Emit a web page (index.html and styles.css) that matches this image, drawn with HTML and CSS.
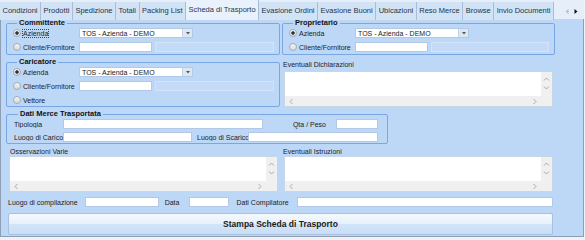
FILE: index.html
```html
<!DOCTYPE html>
<html lang="it">
<head>
    <meta charset="UTF-8">
    <title>Scheda di Trasporto</title>
    <link rel="stylesheet" href="styles.css">
</head>
<body>
    <div class="window">
        <div class="tabs">
            <div class="tab">Condizioni</div>
            <div class="tab">Prodotti</div>
            <div class="tab">Spedizione</div>
            <div class="tab">Totali</div>
            <div class="tab">Packing List</div>
            <div class="tab active">Scheda di Trasporto</div>
            <div class="tab">Evasione Ordini</div>
            <div class="tab">Evasione Buoni</div>
            <div class="tab">Ubicazioni</div>
            <div class="tab">Reso Merce</div>
            <div class="tab">Browse</div>
            <div class="tab">Invio Documenti</div>
            <div class="tab-arrows">
                <svg width="4" height="5" viewBox="0 0 4 5"><polygon points="3.5,0 0.5,2.5 3.5,5" fill="#b4bcc8"/></svg>
                <svg width="4" height="5" viewBox="0 0 4 5"><polygon points="0.5,0 3.5,2.5 0.5,5" fill="#111"/></svg>
            </div>
        </div>

        <div class="page">
            <div class="sheet">
                <div class="top">
                    <div class="col left">
                        <fieldset class="group">
                            <legend>Committente</legend>
                            <div class="row">
                                <label class="opt"><span class="radio on"></span><span class="focus">Azienda</span></label>
                                <div class="select">TOS - Azienda - DEMO<span class="drop"><svg width="4" height="3" viewBox="0 0 4 3"><polygon points="0,0 4,0 2,2.5" fill="#555"/></svg></span></div>
                            </div>
                            <div class="row">
                                <label class="opt"><span class="radio"></span>Cliente/Fornitore</label>
                                <span class="field code"></span>
                                <span class="field off"></span>
                            </div>
                        </fieldset>

                        <fieldset class="group carrier">
                            <legend>Caricatore</legend>
                            <div class="row">
                                <label class="opt"><span class="radio on"></span>Azienda</label>
                                <div class="select">TOS - Azienda - DEMO<span class="drop"><svg width="4" height="3" viewBox="0 0 4 3"><polygon points="0,0 4,0 2,2.5" fill="#555"/></svg></span></div>
                            </div>
                            <div class="row">
                                <label class="opt"><span class="radio"></span>Cliente/Fornitore</label>
                                <span class="field code"></span>
                                <span class="field off"></span>
                            </div>
                            <div class="row">
                                <label class="opt"><span class="radio"></span>Vettore</label>
                            </div>
                        </fieldset>
                    </div>

                    <div class="col right">
                        <fieldset class="group">
                            <legend>Proprietario</legend>
                            <div class="row">
                                <label class="opt"><span class="radio on"></span>Azienda</label>
                                <div class="select">TOS - Azienda - DEMO<span class="drop"><svg width="4" height="3" viewBox="0 0 4 3"><polygon points="0,0 4,0 2,2.5" fill="#555"/></svg></span></div>
                            </div>
                            <div class="row">
                                <label class="opt"><span class="radio"></span>Cliente/Fornitore</label>
                                <span class="field code"></span>
                                <span class="field off"></span>
                            </div>
                        </fieldset>

                        <div class="caption decl">Eventuali Dichiarazioni</div>
                        <div class="memo">
                            <div class="memo-text"></div>
                            <div class="vbar">
                                <svg width="7" height="4" viewBox="0 0 7 4"><polyline points="1,3.5 3.5,1 6,3.5" fill="none" stroke="#a9a9a9"/></svg>
                                <svg width="7" height="4" viewBox="0 0 7 4"><polyline points="1,0.5 3.5,3 6,0.5" fill="none" stroke="#a9a9a9"/></svg>
                            </div>
                            <div class="hbar">
                                <svg width="4" height="7" viewBox="0 0 4 7"><polyline points="3.5,1 1,3.5 3.5,6" fill="none" stroke="#a9a9a9"/></svg>
                                <svg width="4" height="7" viewBox="0 0 4 7"><polyline points="0.5,1 3,3.5 0.5,6" fill="none" stroke="#a9a9a9"/></svg>
                            </div>
                            <div class="corner"></div>
                        </div>
                    </div>
                </div>

                <fieldset class="group goods">
                    <legend>Dati Merce Trasportata</legend>
                    <div class="row">
                        <span class="lbl">Tipologia</span>
                        <span class="field type"></span>
                        <span class="qty">Qta / Peso</span>
                        <span class="field weight"></span>
                    </div>
                    <div class="row">
                        <span class="lbl">Luogo di Carico</span>
                        <span class="field load"></span>
                        <span class="lbl unload">Luogo di Scarico</span>
                        <span class="field grow"></span>
                    </div>
                </fieldset>

                <div class="notes">
                    <div class="col left">
                        <div class="caption">Osservazioni Varie</div>
                        <div class="memo">
                            <div class="memo-text"></div>
                            <div class="vbar">
                                <svg width="7" height="4" viewBox="0 0 7 4"><polyline points="1,3.5 3.5,1 6,3.5" fill="none" stroke="#a9a9a9"/></svg>
                                <svg width="7" height="4" viewBox="0 0 7 4"><polyline points="1,0.5 3.5,3 6,0.5" fill="none" stroke="#a9a9a9"/></svg>
                            </div>
                            <div class="hbar">
                                <svg width="4" height="7" viewBox="0 0 4 7"><polyline points="3.5,1 1,3.5 3.5,6" fill="none" stroke="#a9a9a9"/></svg>
                                <svg width="4" height="7" viewBox="0 0 4 7"><polyline points="0.5,1 3,3.5 0.5,6" fill="none" stroke="#a9a9a9"/></svg>
                            </div>
                            <div class="corner"></div>
                        </div>
                    </div>
                    <div class="col right">
                        <div class="caption">Eventuali Istruzioni</div>
                        <div class="memo">
                            <div class="memo-text"></div>
                            <div class="vbar">
                                <svg width="7" height="4" viewBox="0 0 7 4"><polyline points="1,3.5 3.5,1 6,3.5" fill="none" stroke="#a9a9a9"/></svg>
                                <svg width="7" height="4" viewBox="0 0 7 4"><polyline points="1,0.5 3.5,3 6,0.5" fill="none" stroke="#a9a9a9"/></svg>
                            </div>
                            <div class="hbar">
                                <svg width="4" height="7" viewBox="0 0 4 7"><polyline points="3.5,1 1,3.5 3.5,6" fill="none" stroke="#a9a9a9"/></svg>
                                <svg width="4" height="7" viewBox="0 0 4 7"><polyline points="0.5,1 3,3.5 0.5,6" fill="none" stroke="#a9a9a9"/></svg>
                            </div>
                            <div class="corner"></div>
                        </div>
                    </div>
                </div>

                <div class="compile">
                    <span>Luogo di compilazione</span>
                    <span class="field place"></span>
                    <span class="gap-data">Data</span>
                    <span class="field date"></span>
                    <span class="gap-author">Dati Compilatore</span>
                    <span class="field grow author"></span>
                </div>

                <button class="print">Stampa Scheda di Trasporto</button>
            </div>
        </div>
    </div>
</body>
</html>
```

FILE: styles.css
```css
* {
    box-sizing: border-box;
}

body {
    margin: 0;
    background: #eef3f9;
    font-family: "Liberation Sans", Arial, sans-serif;
    font-size: 7px;
    color: #222;
}

.window {
    width: 584px;
}

/* tab strip */
.tabs {
    display: flex;
    align-items: flex-end;
    height: 20px;
    background: #e6eff9;
}

.tab {
    height: 18px;
    line-height: 17px;
    padding: 0 2.5px;
    font-size: 7.5px;
    color: #24344c;
    white-space: nowrap;
    background: #d2e3f6;
    border-right: 1px solid #a7bdd8;
}

.tab.active {
    height: 20px;
    line-height: 19px;
    background: #e9f2fc;
}

.tab-arrows {
    flex: 1;
    height: 18px;
    display: flex;
    align-items: center;
    justify-content: flex-end;
    gap: 5px;
    padding-right: 6px;
}

/* tab page */
.page {
    height: 218px;
    background: #bdd7f7;
    border: 1px solid #8e9fb5;
    border-top: none;
    padding-left: 5px;
}

.sheet {
    width: 549px;
}

.top, .notes {
    display: flex;
    gap: 2px;
}

.top {
    margin-top: -1px;
}

.col {
    display: flex;
    flex-direction: column;
}

.col.left {
    width: 274px;
}

.col.right {
    width: 273px;
}

/* group boxes */
.group {
    margin: 0;
    min-width: 0;
    padding: 1px 5px 2px 6px;
    border: 1px solid #79a7e3;
    border-radius: 2px;
}

.group legend {
    margin-left: 4px;
    padding: 0 2px;
    font-size: 7.5px;
    line-height: 8px;
    font-weight: bold;
    color: #111;
}

.group.carrier {
    margin-top: 3px;
    padding-bottom: 1px;
}

.row {
    display: flex;
    align-items: center;
    height: 10px;
}

.row + .row {
    margin-top: 4px;
}

.goods .row + .row {
    margin-top: 3px;
}

.opt {
    width: 66px;
    display: flex;
    align-items: center;
    gap: 2px;
    white-space: nowrap;
}

.focus {
    outline: 1px dotted #444;
    outline-offset: 0;
}

.radio {
    width: 8px;
    height: 8px;
    border-radius: 50%;
    border: 1px solid #a3acb8;
    background: linear-gradient(#f6f6f6, #d6d8db);
}

.radio.on {
    background: radial-gradient(circle, #2f3338 0 1.4px, transparent 2px), linear-gradient(#f6f6f6, #d6d8db);
}

.select {
    display: flex;
    align-items: center;
    width: 114px;
    height: 10px;
    padding-left: 2px;
    background: #fff;
    border: 1px solid #b2c8e4;
    white-space: nowrap;
}

.drop {
    margin-left: auto;
    width: 10px;
    height: 100%;
    display: flex;
    align-items: center;
    justify-content: center;
    background: #dde7f3;
    border-left: 1px solid #c3d3e7;
}

.field {
    height: 10px;
    background: #fff;
    border: 1px solid #b2c8e4;
}

.field.code {
    width: 73px;
}

.field.off {
    flex: 1;
    margin-left: 3px;
    background: #c3dbf8;
    border-color: #d4e4f8;
}

.field.grow {
    flex: 1;
}

/* memo boxes */
.caption {
    line-height: 8px;
    white-space: nowrap;
}

.caption.decl {
    margin-top: 6px;
    margin-left: 1px;
}

.decl + .memo {
    margin-top: 2px;
}

.memo {
    display: grid;
    grid-template-columns: 1fr 11px;
    grid-template-rows: 1fr 10px;
    width: 269px;
    height: 36px;
    margin-left: 2px;
    background: #fff;
    border: 1px solid #c8d6e8;
}

.vbar {
    display: flex;
    flex-direction: column;
    justify-content: space-between;
    align-items: center;
    padding: 5px 0 6px;
    background: #f0f0f0;
}

.hbar {
    display: flex;
    justify-content: space-between;
    align-items: center;
    padding: 0 4px;
    background: #f0f0f0;
}

.corner {
    background: #f0f0f0;
}

/* goods */
.group.goods {
    width: 382px;
    margin-top: 3px;
    padding: 1px 9px 1px 7px;
}

.lbl {
    width: 49px;
    white-space: nowrap;
    overflow: hidden;
}

.lbl.unload {
    width: 51px;
    margin-left: 5px;
}

.field.type {
    width: 200px;
}

.qty {
    flex: 1;
    text-align: right;
    padding-right: 10px;
    white-space: nowrap;
}

.field.weight {
    width: 42px;
}

.field.load {
    width: 129px;
}

.notes {
    margin-top: 4px;
}

.notes .left .caption {
    margin-left: 4px;
}

.notes .left .memo {
    margin-left: 3px;
}

.notes .right .caption {
    margin-left: 1px;
}

/* footer */
.compile {
    display: flex;
    align-items: center;
    height: 10px;
    margin-top: 5px;
    padding: 0 2px;
    white-space: nowrap;
}

.field.place {
    width: 74px;
    margin-left: 7px;
}

.gap-data {
    margin-left: 6px;
}

.field.date {
    width: 40px;
    margin-left: 10px;
}

.gap-author {
    margin-left: 7px;
}

.field.author {
    margin-left: 8px;
}

.print {
    display: block;
    width: 545px;
    height: 22px;
    margin: 6px 2px 0;
    padding: 0;
    font-family: "Liberation Sans", Arial, sans-serif;
    font-size: 8.5px;
    font-weight: bold;
    color: #1a1a1a;
    border: 1px solid #a9c1e0;
    border-radius: 2px;
    background: linear-gradient(#f5f9fe 0%, #e7f0fc 48%, #d2e4f9 52%, #c9ddf6 100%);
}
```
